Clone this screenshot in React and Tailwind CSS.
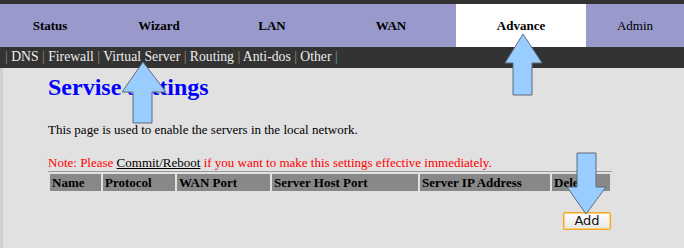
const TABS = [
  { label: 'Status', w: 'w-[100px]', bold: true },
  { label: 'Wizard', w: 'w-[118px]', bold: true },
  { label: 'LAN', w: 'w-[108px]', bold: true },
  { label: 'WAN', w: 'w-[130px]', bold: true },
  { label: 'Advance', w: 'w-[130px]', bold: true, active: true },
  { label: 'Admin', w: 'w-[98px]', bold: false },
];

const SUB = ['DNS', 'Firewall', 'Virtual Server', 'Routing', 'Anti-dos', 'Other'];

const COLS = [
  { label: 'Name', w: 'w-[51px]' },
  { label: 'Protocol', w: 'w-[72px]' },
  { label: 'WAN Port', w: 'w-[93px]' },
  { label: 'Server Host Port', w: 'w-[146px]' },
  { label: 'Server IP Address', w: 'w-[130px]' },
  { label: 'Delete', w: 'w-[58px]' },
];

function Arrows() {
  return (
    <svg className="absolute left-0 top-0 pointer-events-none" width="684" height="248">
      <g fill="#99ccff" stroke="#5f6b7a" strokeWidth="1" strokeLinejoin="miter">
        <polygon points="143,62 166,92 152,92 152,123 133,123 133,92 122,92" />
        <polygon points="523,34 542,63 532,63 532,95 513,95 513,63 505,63" />
        <polygon points="577,153 596,153 596,187 606,187 586,214 567,187 577,187" />
      </g>
    </svg>
  );
}

export default function App() {
  return (
    <div className="relative w-[684px] h-[248px] overflow-hidden bg-[#e1e1e1] font-['Liberation_Serif',serif] text-black">
      <div className="h-[4px] bg-[#333333]" />
      <div className="flex h-[43px] bg-[#9999cc]">
        {TABS.map((t) => (
          <div
            key={t.label}
            className={`${t.w} flex items-center justify-center text-[13px] ${t.bold ? 'font-bold' : ''} ${t.active ? 'bg-white' : ''}`}
          >
            {t.label}
          </div>
        ))}
      </div>
      <div className="h-[21px] bg-[#333333] flex items-center pl-[5px] text-[13.7px] text-[#eeeeee] whitespace-pre">
        {SUB.map((s) => (
          <span key={s}>
            <span className="text-[#a08a60]">|</span> {s}{' '}
          </span>
        ))}
        <span className="text-[#5aa0a0]">|</span>
      </div>
      <div className="border-l-[3px] border-[#d0d0d0] h-full pl-[45px] pt-[4px]">
        <h1 className="text-[24px] font-bold text-[#0000ff] leading-[30px]">Servise Settings</h1>
        <p className="text-[13px] mt-[20px] leading-[16px]">This page is used to enable the servers in the local network.</p>
        <p className="text-[13px] mt-[17px] leading-[16px] text-[#ff0000]">
          Note: Please <span className="text-black underline">Commit/Reboot</span> if you want to make this settings effective immediately.
        </p>
        <div className="w-[564px] h-[1px] bg-[#999999]" />
        <div className="flex gap-[2px] mt-[2px] pl-[2px]">
          {COLS.map((c) => (
            <div key={c.label} className={`${c.w} h-[17px] bg-[#888888] text-[13px] font-bold leading-[17px] pl-[2px] overflow-hidden whitespace-nowrap`}>
              {c.label}
            </div>
          ))}
        </div>
        <div className="flex justify-end w-[563px] mt-[21px]">
          <button className="w-[48px] h-[18px] border border-[#f5a623] rounded-[2px] bg-gradient-to-b from-white to-[#e6e6e6] text-[13px] leading-[14px] font-['DejaVu_Sans',sans-serif] text-[#111] shadow-[inset_0_0_0_1px_#ffd27a]">
            Add
          </button>
        </div>
      </div>
      <Arrows />
    </div>
  );
}
